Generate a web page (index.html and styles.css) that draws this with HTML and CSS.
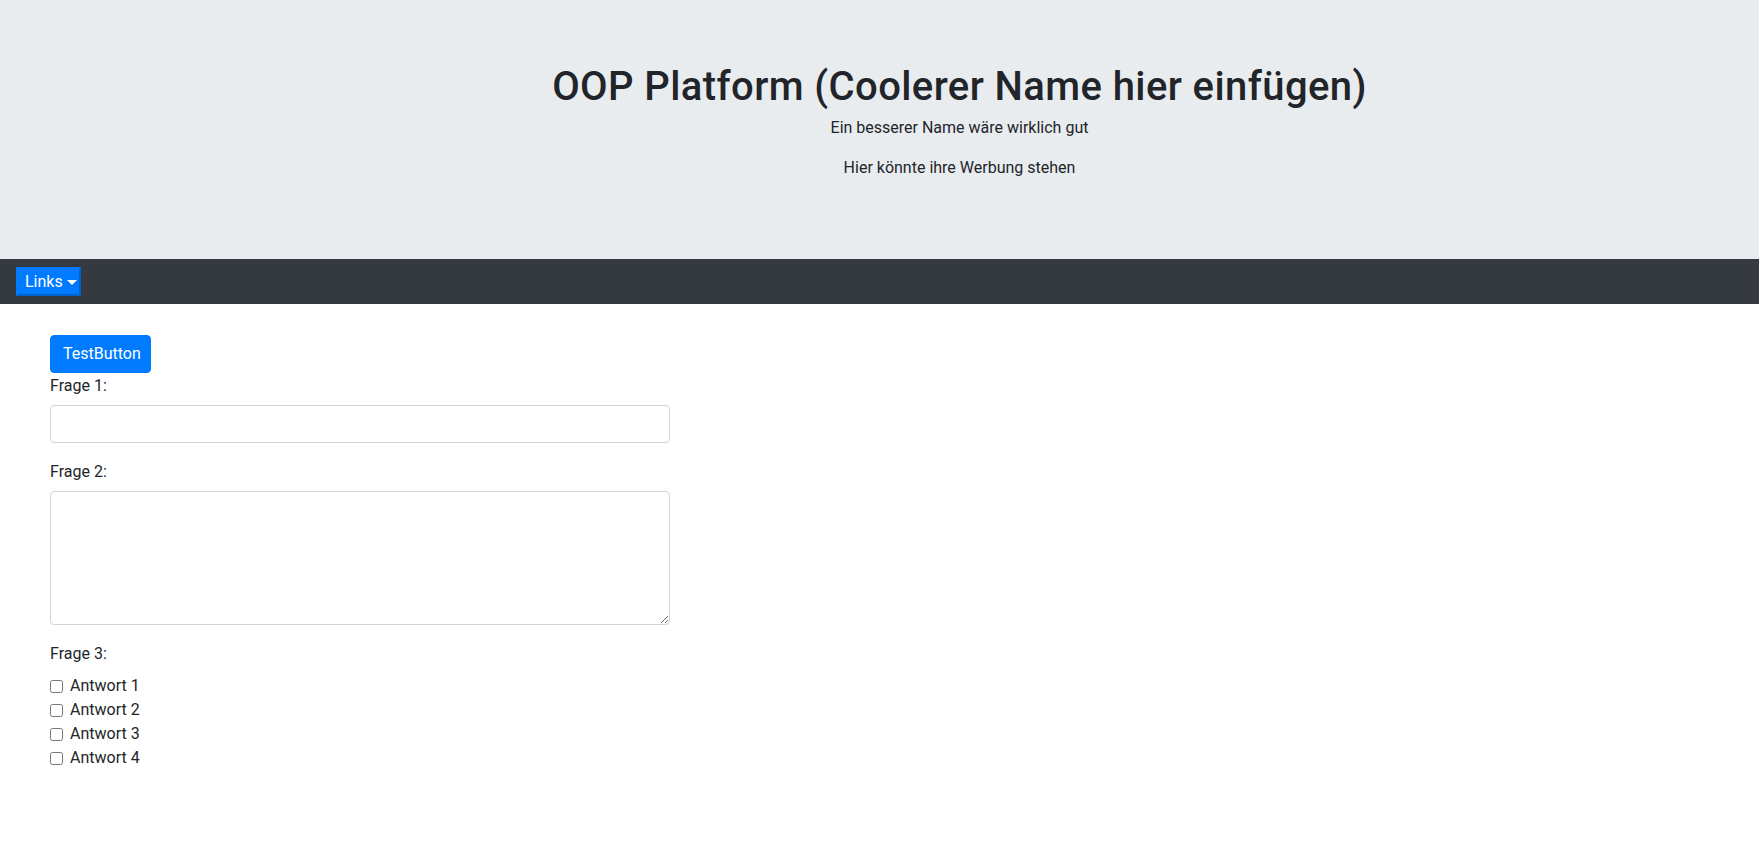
FILE: index.html
```html
<!DOCTYPE html>
<html lang="de">
<head>
<meta charset="utf-8">
<title>OOP Platform</title>
<link rel="stylesheet" href="styles.css">
</head>
<body>
<header class="jumbotron">
  <h1 class="title">OOP Platform (Coolerer Name hier einfügen)</h1>
  <p class="subtitle">Ein besserer Name wäre wirklich gut</p>
  <p class="ad">Hier könnte ihre Werbung stehen</p>
</header>
<nav class="navbar">
  <button class="dropdown-btn" type="button">Links<span class="caret"></span></button>
</nav>
<main class="content">
  <button class="btn-primary" type="button">TestButton</button>
  <div class="form-group">
    <label class="label" for="f1">Frage 1:</label>
    <input class="form-control" id="f1" type="text">
  </div>
  <div class="form-group">
    <label class="label" for="f2">Frage 2:</label>
    <textarea class="form-control textarea" id="f2" rows="5"></textarea>
  </div>
  <div class="form-group">
    <label class="label">Frage 3:</label>
    <div class="check-list">
      <label class="check"><input type="checkbox" class="check-box">Antwort 1</label>
      <label class="check"><input type="checkbox" class="check-box">Antwort 2</label>
      <label class="check"><input type="checkbox" class="check-box">Antwort 3</label>
      <label class="check"><input type="checkbox" class="check-box">Antwort 4</label>
    </div>
  </div>
</main>
</body>
</html>
```
FILE: styles.css
```css
* { box-sizing: border-box; }
html, body { margin: 0; padding: 0; }
body {
  font-family: Roboto, "Liberation Sans", sans-serif;
  font-size: 16px;
  line-height: 24px;
  color: #212529;
  background: #fff;
}
.jumbotron {
  background: #e9ecef;
  height: 259px;
  padding: 63px 0 0 160px;
  text-align: center;
}
.title {
  margin: 0 0 5px;
  font-size: 40px;
  line-height: 48px;
  font-weight: 500;
  letter-spacing: 0.4px;
}
.subtitle { margin: 0 0 16px; }
.ad { margin: 0; }
.navbar {
  background: #343a40;
  height: 45px;
  padding: 8px 16px;
  display: flex;
  align-items: flex-start;
}
.dropdown-btn {
  font: inherit;
  color: #fff;
  background: #007bff;
  height: 29px;
  width: 65px;
  padding: 0 0 0 7px;
  border: 2px solid;
  border-color: #007bff #0062cc #0062cc #007bff;
  display: flex;
  align-items: center;
  line-height: 24px;
}
.caret {
  display: inline-block;
  margin-left: 4px;
  border-top: 5px solid #fff;
  border-left: 5px solid transparent;
  border-right: 5px solid transparent;
  margin-top: 1px;
}
.content {
  padding: 31px 50px 0;
}
.btn-primary {
  display: block;
  font: inherit;
  color: #fff;
  background: #007bff;
  border: 1px solid #007bff;
  border-radius: 4px;
  padding: 6px 12px;
  line-height: 24px;
  height: 38px;
  width: 101px;
}
.form-group { margin-bottom: 16px; }
.label { display: block; margin-bottom: 8px; padding-top: 1px; height: 24px; }
.form-control {
  display: block;
  width: 620px;
  height: 38px;
  padding: 6px 12px;
  font: inherit;
  color: #495057;
  background: #fff;
  border: 1px solid #ced4da;
  border-radius: 4px;
}
.textarea {
  height: 134px;
  resize: vertical;
}
.check {
  display: block;
  height: 24px;
  padding-top: 1px;
}
.check-box {
  width: 13px;
  height: 13px;
  margin: 0 7px 0 0;
  vertical-align: -2px;
}
```
